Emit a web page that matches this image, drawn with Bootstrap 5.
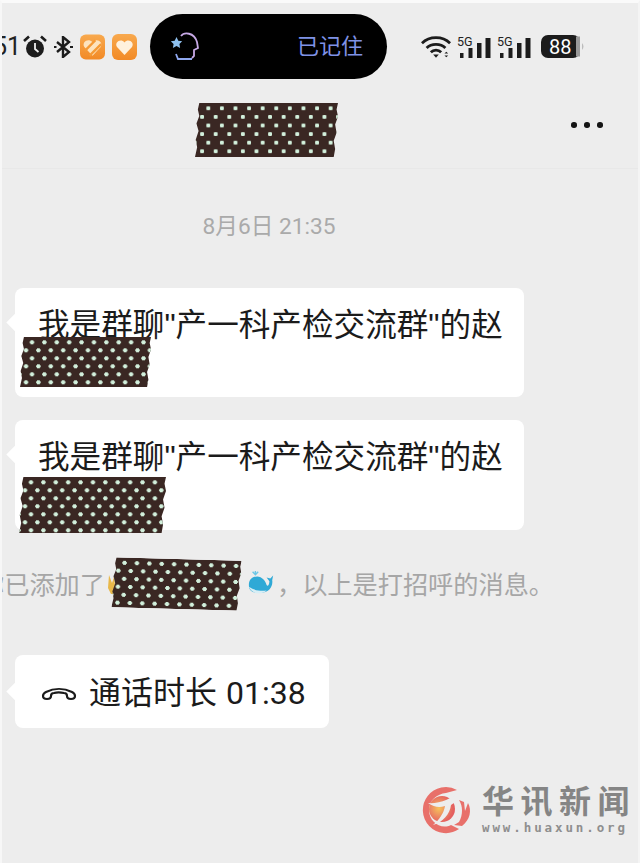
<!DOCTYPE html>
<html lang="zh">
<head>
<meta charset="utf-8">
<title>聊天</title>
<link href="https://cdn.jsdelivr.net/npm/bootstrap@5.3.0/dist/css/bootstrap.min.css" rel="stylesheet">
<style>
html,body{height:100%}
body{background:#ededed;font-family:"Liberation Sans","Noto Sans CJK SC",sans-serif;color:#1c1c1c;overflow:hidden}
.phone{position:relative;width:640px;height:863px;overflow:hidden;border-top:3px solid #fafafa;border-left:2px solid #f7f7f7;border-right:2px solid #f4f4f4}
.statusrow{height:65px;margin-top:11px}
.clock-txt{font-size:25px;line-height:1;margin-left:-9px;width:22px;color:#222;font-family:"Roboto",sans-serif}
.lefticons{gap:7px;margin-left:8px}
.island{width:237px;height:65px;background:#000;border-radius:33px;margin-left:13px;padding:0 24px 0 20px;color:#7f92e6;font-size:22px}
.righticons{margin-left:34px;gap:6px}
.headrow{height:90px;padding-top:24px;border-bottom:1px solid #e8e8e8}
.tape{background-color:#3a2723;background-image:radial-gradient(circle at center,#d2f0dc 0 1.9px,transparent 2.4px),radial-gradient(circle at center,#d2f0dc 0 1.9px,transparent 2.4px);background-size:13.6px 17.2px;background-position:6.5px -3.3px,.3px 5.3px;clip-path:polygon(3% 0,100% 0,99% 12%,100% 25%,98% 40%,99% 55%,97% 70%,98% 85%,97% 100%,0 100%,1.5% 82%,0.5% 68%,2.5% 52%,1% 38%,3% 24%,2% 12%)}
.tape-head{width:143px;height:54px;margin-left:193px}
.dots{gap:7.5px;margin-left:233px;padding-top:19px}
.dot{width:5.5px;height:5.5px;border-radius:50%;background:#151515}
.timeline{margin-top:43px;margin-bottom:46px;text-align:center;margin-right:102px;color:#aaa;font-size:22.7px;line-height:30px;font-family:"Roboto","Noto Sans CJK SC",sans-serif}
.msg{position:relative;background:#fff;border-radius:8px;margin-left:13px;width:509px;padding:18px 0 0 23px;color:#1b1b1b;font-size:31.6px;line-height:38px;white-space:nowrap}
.msg::before{content:"";position:absolute;left:-6px;top:28px;width:13px;height:13px;background:#fff;transform:rotate(45deg)}
.msg-a{height:109px}
.msg-b{height:110px;margin-top:23px}
.tape-a,.tape-b,.tape-c{background-size:12.4px 16px;background-position:5.8px -2.7px,-.2px 5.3px}
.tape-a{width:131px;height:50px;margin:-7px 0 0 -18px}
.tape-b{width:147px;height:56px;margin:1px 0 0 -19px}
.sysline{margin-top:28px;height:52px;margin-left:-23px;color:#a6a6a6;font-size:25.2px;white-space:nowrap}
.systxt{padding-top:4px}
.vhand{margin-left:3px}
.tape-c{width:129px;height:50px;transform:rotate(1.6deg);margin-left:-6px}
.whale{margin-left:6px;margin-right:2px}
.msg-call{width:314px;height:73px;margin-top:45px;padding:0 0 0 26px;font-size:32px}
.msg-call::before{top:30px}
.calltxt{gap:12px;height:73px;padding-top:3px;font-family:"Roboto","Noto Sans CJK SC",sans-serif;word-spacing:1px}
.mark-wrap{position:absolute;left:419px;top:781px;gap:9px}
.mark-cn{font-family:"Liberation Serif","Noto Sans CJK SC",serif;font-weight:700;font-size:32px;line-height:32px;letter-spacing:6.5px;color:#858585}
.mark-url{font-family:"DejaVu Sans Mono","Liberation Mono",monospace;font-size:12.5px;line-height:14px;margin-top:3px;letter-spacing:2.9px;color:#8f8f8f;font-weight:700}
</style>
</head>
<body>
<div class="phone">
  <div class="statusrow d-flex align-items-center">
    <div class="clock-txt">51</div>
    <div class="d-flex align-items-center lefticons">
      <svg width="24" height="24" viewBox="0 0 24 24"><circle cx="12" cy="13.500" r="9" fill="#1c1c1c"/><path d="M12 8v6l3.500 3" stroke="#eee" stroke-width="1.800" fill="none"/><path d="M1 6 6 1.500M23 6 18 1.500" stroke="#1c1c1c" stroke-width="2.600"/></svg>
      <svg width="19" height="22" viewBox="0 0 19 22" fill="none" stroke="#1c1c1c" stroke-width="2.400"><path d="M3 6l12 10-6 5V1l6 5L3 16"/><path d="M0 11h2.500M16 11h3" stroke-width="2"/></svg>
      <svg width="25" height="26" viewBox="0 0 26 26"><defs><linearGradient id="oa" x1="0" y1="0" x2="0" y2="1"><stop offset="0" stop-color="#f8a94e"/><stop offset="1" stop-color="#f28a26"/></linearGradient></defs><rect width="26" height="26" rx="6" fill="url(#oa)"/><path d="M13 22 4.500 13C1.500 8 8.500 3 13 8c4.500-5 11.500 0 8.500 5z" fill="#fde3bd"/><path d="M5 17 16 6M10 22 22 10" stroke="#f59a35" stroke-width="2.500"/></svg>
      <svg width="25" height="26" viewBox="0 0 25 26"><rect width="25" height="26" rx="6" fill="url(#oa)"/><path d="M12.500 21 5 13c-3-5 4-9 7.500-4.500C16 4 23 8 20 13z" fill="#fff1dd"/></svg>
    </div>
    <div class="island d-flex align-items-center justify-content-between">
      <svg width="30" height="30" viewBox="0 0 30 30" fill="none"><path d="M11 4C14 0 24 0 27 10l1 6-4 2v6l-2 2" stroke="#c7a9e6" stroke-width="1.800"/><path d="M22 27H8l-2-5" stroke="#8fa8ef" stroke-width="1.800"/><path d="M6.500 5l1.800 3.700 3.900.5-2.800 2.800.7 4-3.600-2-3.600 2 .7-4L.8 9.200l3.900-.5z" fill="#8fc1ef"/></svg>
      <span>已记住</span>
    </div>
    <div class="d-flex align-items-center righticons">
      <svg width="30" height="24" viewBox="0 0 32 24"><path d="M1 8c8-8 22-8 30 0M6 13c5-5 15-5 20 0M10.500 17.500c3-3 8-3 11 0" fill="none" stroke="#1c1c1c" stroke-width="3"/><path d="M13 20h6l-3 3.500z" fill="#1c1c1c"/><path d="M27 17l2 2h-4zM27 23l2-2h-4z" fill="#1c1c1c"/></svg>
      <svg width="34" height="24" viewBox="0 0 34 24"><text x="0" y="11" font-size="12.500" font-family="Roboto" fill="#222">5G</text><g fill="#1c1c1c"><rect x="3" y="18" width="3.500" height="5"/><rect x="11.500" y="13" width="4" height="10"/><rect x="20" y="8" width="4.500" height="15"/><rect x="28.500" y="3" width="5" height="20"/></g></svg>
      <svg width="34" height="24" viewBox="0 0 34 24"><text x="0" y="11" font-size="12.500" font-family="Roboto" fill="#222">5G</text><g fill="#1c1c1c"><rect x="3" y="18" width="3.500" height="5"/><rect x="11.500" y="13" width="4" height="10"/><rect x="20" y="8" width="4.500" height="15"/><rect x="28.500" y="3" width="5" height="20"/></g></svg>
      <svg width="46" height="24" viewBox="0 0 46 24" class="ms-1"><rect x="0" y="0" width="39" height="23" rx="7" fill="#1c1c1c"/><rect x="35" y="1.500" width="4" height="20" fill="#9a9a9a"/><path d="M41 8c2 2 2 5 0 7z" fill="#bbb"/><text x="8" y="19" font-size="20" font-family="Roboto" fill="#fff">88</text></svg>
    </div>
  </div>

  <div class="headrow d-flex">
    <div class="tape tape-head"></div>
    <div class="d-flex dots align-items-start"><span class="dot"></span><span class="dot"></span><span class="dot"></span></div>
  </div>

  <div class="timeline">8月6日 21:35</div>

  <div class="msg msg-a">我是群聊"产一科产检交流群"的赵
    <div class="tape tape-a"></div>
  </div>
  <div class="msg msg-b">我是群聊"产一科产检交流群"的赵
    <div class="tape tape-b"></div>
  </div>

  <div class="sysline d-flex align-items-center">
    <span class="systxt">你已添加了</span>
    <svg class="vhand" width="10" height="22" viewBox="0 0 10 22"><path d="M1 2l3 8 2-6 1 8 3 4-3 5H3l-3-6z" fill="#e8b84a"/></svg>
    <div class="tape tape-c"></div>
    <svg class="whale" width="28" height="28" viewBox="0 0 30 28"><path d="M2 15c0-6 4-9 9-9s9 5 10 9c1 2 3 0 3-4l-3-4 4 1 3-3-1 5c1 6-3 13-11 13H9c-4 0-7-3-7-8z" fill="#2fa9d6"/><path d="M2 17c2 5 6 7 10 7s7-1 9-3c-6 1-13 0-19-4z" fill="#d8eef5"/><path d="M9 0v4M6 1l3 3 3-3" stroke="#6cc6e6" stroke-width="1.500" fill="none"/></svg>
    <span class="systxt">，以上是打招呼的消息。</span>
  </div>

  <div class="msg msg-call">
    <div class="calltxt d-flex align-items-center">
      <svg width="36" height="18" viewBox="0 0 36 18" fill="none" stroke="#1b1b1b" stroke-width="2.200"><path d="M2 12c0-2 1-3 3-4 8-4 18-4 26 0 2 1 3 2 3 4 0 2-2 3-4 3-3 0-4-1-4-3 0-2-1-3-3-3-4-1-7-1-10 0-2 0-3 1-3 3 0 2-1 3-4 3-2 0-4-1-4-3z"/></svg>
      <span>通话时长 01:38</span>
    </div>
  </div>

  <div class="mark-wrap d-flex align-items-center">
    <svg width="52" height="52" viewBox="0 0 52 52"><defs><radialGradient id="lg" cx=".38" cy=".48" r=".55"><stop offset="0" stop-color="#f6c25a"/><stop offset=".55" stop-color="#ec8a62"/><stop offset="1" stop-color="#e4605f"/></radialGradient></defs><path d="M36 6A23 23 0 1 0 38 45L30 41C20 46 8 38 8 26 8 16 16 10 25 9z" fill="#e8706a"/><circle cx="21" cy="25" r="13" fill="url(#lg)"/><path d="M7 19c11 1 24-4 33-13-2 8-6 13-10 15-1 9-8 17-18 20 6-5 11-12 12-19-6 2-11 1-17-3z" fill="#ededed"/><path d="M38 16c4 6 4 15 0 22l-5 3 8 1c8-6 10-16 6-23l-3 8-1-9z" fill="#e8706a"/></svg>
    <div>
      <div class="mark-cn">华讯新闻</div>
      <div class="mark-url">www.huaxun.org</div>
    </div>
  </div>
</div>
</body>
</html>
